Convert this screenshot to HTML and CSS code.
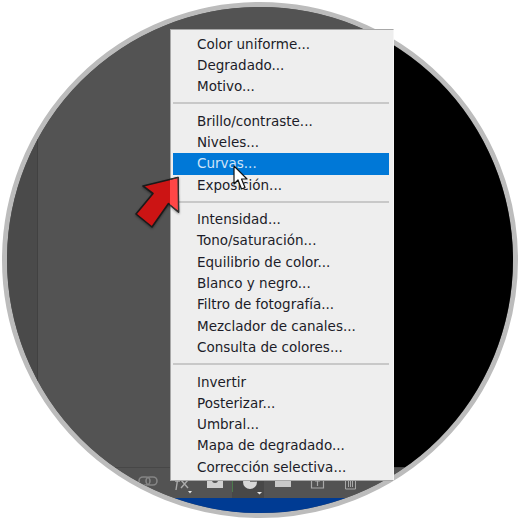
FILE: index.html
```html
<!DOCTYPE html>
<html lang="es">
<head>
	<title>Menú de ajustes</title>
	<meta charset="utf-8">
	<link rel="stylesheet" href="styles.css">
</head>
<body>
	<div class="lens">
		<div class="main">
			<div class="dock"></div>
			<div class="canvas"></div>
			<div class="black"></div>
		</div>
		<div class="toolbar">
			<svg class="tool-icons" width="260" height="30" viewBox="0 0 260 30">
				<g fill="none" stroke="#858585" stroke-width="1.6">
					<rect x="9" y="9" width="11" height="8" rx="4"/>
					<rect x="16" y="9" width="11" height="8" rx="4"/>
				</g>
				<path d="M46 22l2-13h3M45 13h5M51 12l7 8M58 12l-7 8" fill="none" stroke="#ababab" stroke-width="1.4"/>
				<path d="M58 23h4l-2 2.500z" fill="#e4e4e4"/>
				<rect x="77" y="9" width="16" height="11" fill="#d0d0d0"/>
				<circle cx="85" cy="12" r="3" fill="#535353"/>
				<rect x="102" y="0" width="32" height="30" fill="#484848"/>
				<path d="M102.500 0v24" stroke="#4c7a4c"/>
				<circle cx="120" cy="14" r="7" fill="#d8d8d8"/>
				<path d="M120 7a7 7 0 0 1 7 7h-7z" fill="#777"/>
				<path d="M127 24h5l-2.500 2.500z" fill="#e4e4e4"/>
				<rect x="145" y="9" width="16" height="10" fill="#c8c8c8"/>
				<path d="M181.500 8h12v12h-12zM187.500 13v5M185 13h5" fill="none" stroke="#a8a8a8" stroke-width="1.200"/>
				<path d="M215.500 8h10v13h-10zM218.500 10v9M220.500 10v9M222.500 10v9" fill="none" stroke="#a8a8a8"/>
			</svg>
		</div>
		<div class="taskbar"></div>
	</div>

	<ul class="menu">
		<li>Color uniforme...</li>
		<li>Degradado...</li>
		<li>Motivo...</li>
		<li class="sep"></li>
		<li>Brillo/contraste...</li>
		<li>Niveles...</li>
		<li class="active">Curvas...</li>
		<li>Exposición...</li>
		<li class="sep"></li>
		<li>Intensidad...</li>
		<li>Tono/saturación...</li>
		<li>Equilibrio de color...</li>
		<li>Blanco y negro...</li>
		<li>Filtro de fotografía...</li>
		<li>Mezclador de canales...</li>
		<li>Consulta de colores...</li>
		<li class="sep"></li>
		<li>Invertir</li>
		<li>Posterizar...</li>
		<li>Umbral...</li>
		<li>Mapa de degradado...</li>
		<li>Corrección selectiva...</li>
	</ul>

	<svg class="arrow" width="60" height="62" viewBox="130 170 60 62">
		<path d="M143 186L178 177.500L178.500 212L168.500 203.500L152 227L136 214L153 193.500Z" fill="#cc1414" stroke="#1a1a1a" stroke-width="1.600" stroke-linejoin="round"/>
		<path d="M170 180L178 178L178.500 211L170 204.500Z" fill="#ff4646"/>
		<path d="M170 179.500L178 177.500L178.500 212L170 205" fill="none" stroke="#333" stroke-width="1.200"/>
	</svg>
	<svg class="cursor" width="20" height="26" viewBox="233 165 20 26">
		<path d="M234 166V184L238 180L241.500 189L245 187.500L241.500 179L247 179Z" fill="#fff" stroke="#111" stroke-width="1.200" stroke-linejoin="round"/>
	</svg>
</body>
</html>
```

FILE: styles.css
```css
*{
	margin: 0;
	padding: 0;
	box-sizing: border-box;
}
body{
	position: relative;
	width: 520px;
	height: 520px;
	padding: 2px;
	background: #fff;
	overflow: hidden;
}
.lens{
	display: flex;
	flex-direction: column;
	width: 516px;
	height: 516px;
	border: 5px solid #bcbcbc;
	border-radius: 50%;
	overflow: hidden;
	background: #535353;
}
.main{
	display: flex;
	flex: 1;
}
.dock{
	width: 31px;
	background: #4a4a4a;
	border-right: 1px solid #414141;
}
.canvas{
	flex: 1;
	background: #535353;
}
.black{
	width: 125px;
	background: #000;
	border-left: 1px solid #f0f0f0;
}
.toolbar{
	height: 31px;
	padding-left: 123px;
	background: #535353;
	border-top: 1px solid #474747;
}
.tool-icons{
	display: block;
}
.taskbar{
	height: 15px;
	background: #003b93;
}
.menu{
	position: absolute;
	left: 170px;
	top: 29px;
	width: 224px;
	height: 452px;
	padding: 3.500px 4px 0 2px;
	list-style: none;
	background: #eeeeee;
	border: 1px solid #a8a8a8;
	border-right-color: #f6f6f6;
	font-family: "DejaVu Sans", sans-serif;
	font-size: 13.500px;
	color: #1c1c28;
}
.menu li{
	height: 21.300px;
	line-height: 21px;
	padding-left: 24px;
	white-space: nowrap;
}
.menu .sep{
	height: 1.800px;
	margin: 5px 0 6.500px 0;
	padding: 0;
	background: #c8c8c8;
}
.menu .active{
	background: #0078d7;
	color: #cfe4f7;
}
.arrow{
	position: absolute;
	left: 130px;
	top: 170px;
	filter: drop-shadow(0 1px 1px rgba(0, 0, 0, 0.4));
}
.cursor{
	position: absolute;
	left: 233px;
	top: 165px;
}
```
